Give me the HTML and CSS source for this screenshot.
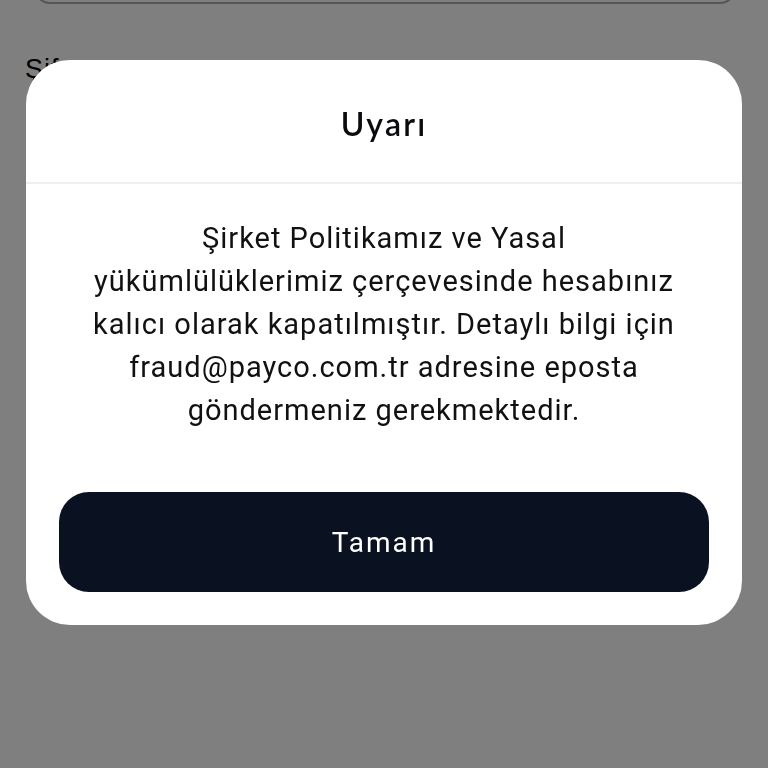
FILE: index.html
```html
<!DOCTYPE html>
<html lang="tr">
<head>
<meta charset="utf-8">
<link rel="stylesheet" href="styles.css">
</head>
<body>
<div class="page">
  <div class="input-box"></div>
  <div class="field-label">Şifre</div>
  <div class="input-box second"></div>
</div>
<div class="overlay">
  <div class="modal">
    <div class="modal-header">
      <h2 class="modal-title">Uyarı</h2>
    </div>
    <div class="modal-body">
      <p class="modal-text">Şirket Politikamız ve Yasal yükümlülüklerimiz çerçevesinde hesabınız kalıcı olarak kapatılmıştır. Detaylı bilgi için fraud@payco.com.tr adresine eposta göndermeniz gerekmektedir.</p>
      <button class="modal-button">Tamam</button>
    </div>
  </div>
</div>
</body>
</html>
```

FILE: styles.css
```css
html, body {
  margin: 0;
  padding: 0;
  width: 768px;
  height: 768px;
  overflow: hidden;
  background: #ffffff;
  font-family: Roboto, "Liberation Sans", sans-serif;
}
.page {
  padding: 0 32px 0 34px;
}
.input-box {
  margin-top: -60px;
  height: 64px;
  border: 2px solid #aaaaaa;
  border-top: none;
  border-radius: 0 0 16px 16px;
  box-sizing: border-box;
}
.input-box.second {
  margin-top: 40px;
  height: 100px;
  border: 2px solid #aaaaaa;
  border-radius: 16px;
}
.field-label {
  margin: 50px 0 0 -9px;
  font-family: "Liberation Sans", sans-serif;
  font-size: 27px;
  letter-spacing: 1px;
  color: #000;
  line-height: 30px;
}
.overlay {
  position: fixed;
  inset: 0;
  background: rgba(0, 0, 0, 0.5);
}
.modal {
  position: absolute;
  left: 26px;
  top: 60px;
  width: 716px;
  height: 565px;
  background: #ffffff;
  border-radius: 44px;
  overflow: hidden;
  display: flex;
  flex-direction: column;
}
.modal-header {
  height: 122px;
  border-bottom: 2px solid #eeeef3;
  display: flex;
  align-items: center;
  justify-content: center;
}
.modal-title {
  margin: 4px 0 0 0;
  font-family: Lato, "Noto Sans", sans-serif;
  font-weight: 600;
  font-size: 32px;
  color: #0b0b0f;
  letter-spacing: 2.2px;
}
.modal-body {
  flex: 1;
  display: flex;
  flex-direction: column;
  align-items: center;
  padding: 33px 34px 33px 34px;
}
.modal-text {
  margin: 0;
  font-size: 29px;
  line-height: 43px;
  letter-spacing: 1px;
  text-align: center;
  color: #111111;
  padding: 0 20px;
}
.modal-button {
  margin-top: auto;
  width: 650px;
  height: 100px;
  border: none;
  border-radius: 30px;
  background: #0a1120;
  color: #ffffff;
  font-family: Roboto, "Liberation Sans", sans-serif;
  font-size: 28px;
  letter-spacing: 2px;
}
```
